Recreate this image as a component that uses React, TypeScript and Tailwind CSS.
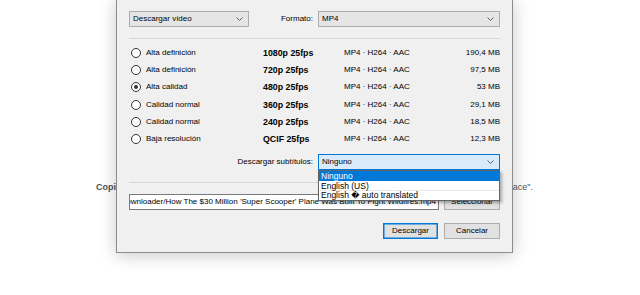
import React from 'react';

const Chevron = () => (
    <svg width="7" height="4" viewBox="0 0 7 4" className="shrink-0">
        <polyline points="0.5,0.5 3.5,3.5 6.5,0.5" fill="none" stroke="#555" strokeWidth="0.9" />
    </svg>
);

const Combo = ({ text, className = "", active = false }: { text: string; className?: string; active?: boolean }) => (
    <div className={`h-[16px] flex items-center justify-between pl-[3px] pr-[5px] border ${active ? "border-[#0078d7] bg-[#d9ebfa]" : "border-[#adadad] bg-[#e5e5e5]"} ${className}`}>
        <span>{text}</span>
        <Chevron />
    </div>
);

const Radio = ({ checked }: { checked?: boolean }) => (
    <div className="w-[10px] h-[10px] rounded-full border border-[#333] bg-white flex items-center justify-center shrink-0">
        {checked && <div className="w-[4px] h-[4px] rounded-full bg-[#333]" />}
    </div>
);

const formats = [
    { label: "Alta definición", res: "1080p 25fps", size: "190,4 MB" },
    { label: "Alta definición", res: "720p 25fps", size: "97,5 MB" },
    { label: "Alta calidad", res: "480p 25fps", size: "53 MB", checked: true },
    { label: "Calidad normal", res: "360p 25fps", size: "29,1 MB" },
    { label: "Calidad normal", res: "240p 25fps", size: "18,5 MB" },
    { label: "Baja resolución", res: "QCIF 25fps", size: "12,3 MB" },
];

const App = () => {
    return (
        <div className="relative w-[640px] h-[295px] bg-white overflow-hidden font-['Liberation_Sans',Arial,sans-serif]">
            {/* page text behind the dialog */}
            <div className="absolute top-[181px] left-[96px] w-[437px] flex justify-between text-[9px] leading-[12px]">
                <span className="font-bold text-[#4b4f5c]">Copia</span>
                <span className="text-[#555]">enlace".</span>
            </div>

            {/* dialog */}
            <div className="absolute left-[116px] top-[-1px] w-[397px] h-[254px] bg-[#f0f0f0] border border-[#8c8c8c] shadow-[0_2px_16px_rgba(0,0,0,0.22)] text-[8px] leading-[10px] text-black">
                <div className="flex flex-col pl-[12px] pr-[12px]">
                    <div className="mt-[11px] flex items-center">
                        <Combo text="Descargar vídeo" className="w-[120px]" />
                        <span className="flex-1 text-right pr-[5px]">Formato:</span>
                        <Combo text="MP4" className="w-[182px]" />
                    </div>

                    <div className="mt-[11px] h-px bg-[#d7d7d7]" />

                    <div className="mt-[5px] flex flex-col">
                        {formats.map((f, i) => (
                            <div key={i} className="h-[17.33px] flex items-center">
                                <div className="w-[134px] flex items-center pl-[2px]">
                                    <Radio checked={f.checked} />
                                    <span className="ml-[5px]">{f.label}</span>
                                </div>
                                <span className="w-[81px] font-bold text-[8.8px]">{f.res}</span>
                                <span className="flex-1">MP4 · H264 · AAC</span>
                                <span className="text-right">{f.size}</span>
                            </div>
                        ))}
                    </div>

                    <div className="mt-[6px] flex items-center">
                        <span className="flex-1 text-right pr-[5px]">Descargar subtítulos:</span>
                        <div className="relative w-[182px]">
                            <Combo text="Ninguno" active />
                            <div className="absolute left-0 top-full w-full h-[31px] bg-white border border-[#646464] shadow-[2px_2px_3px_rgba(0,0,0,0.3)] text-[8.5px] leading-[10px] flex flex-col">
                                <div className="h-[10px] bg-[#0078d7] text-white pl-[2px]">Ninguno</div>
                                <div className="h-[10px] pl-[2px] border-b border-[#e8e8e8]">English (US)</div>
                                <div className="h-[9px] pl-[2px] font-['DejaVu_Sans',sans-serif] text-[8px] leading-[9px]">
                                    <span className="font-['Liberation_Sans',sans-serif] text-[8.5px]">English </span>{"\uFFFD"}<span className="font-['Liberation_Sans',sans-serif] text-[8.5px]"> auto translated</span>
                                </div>
                            </div>
                        </div>
                    </div>

                    <div className="mt-[12px] h-px bg-[#d7d7d7]" />

                    <div className="mt-[11px] flex items-center gap-[5px]">
                        <div className="w-[310px] h-[16px] bg-white border border-[#7a7a7a] overflow-hidden flex justify-end items-center pr-[2px]">
                            <span className="whitespace-nowrap">C:/Users/Usuario/Downloads/Video Downloader/How The $30 Million 'Super Scooper' Plane Was Built To Fight Wildfires.mp4</span>
                        </div>
                        <div className="flex-1 h-[16px] bg-[#e1e1e1] border border-[#adadad] flex items-center justify-center">Seleccionar</div>
                    </div>

                    <div className="mt-[13px] flex justify-end gap-[6px]">
                        <div className="w-[55px] h-[16px] bg-[#e1e1e1] border border-[#0078d7] shadow-[inset_0_0_0_0.5px_#0078d7] flex items-center justify-center">Descargar</div>
                        <div className="w-[56px] h-[16px] bg-[#e1e1e1] border border-[#adadad] flex items-center justify-center">Cancelar</div>
                    </div>
                </div>
            </div>
        </div>
    );
};

export default App;
